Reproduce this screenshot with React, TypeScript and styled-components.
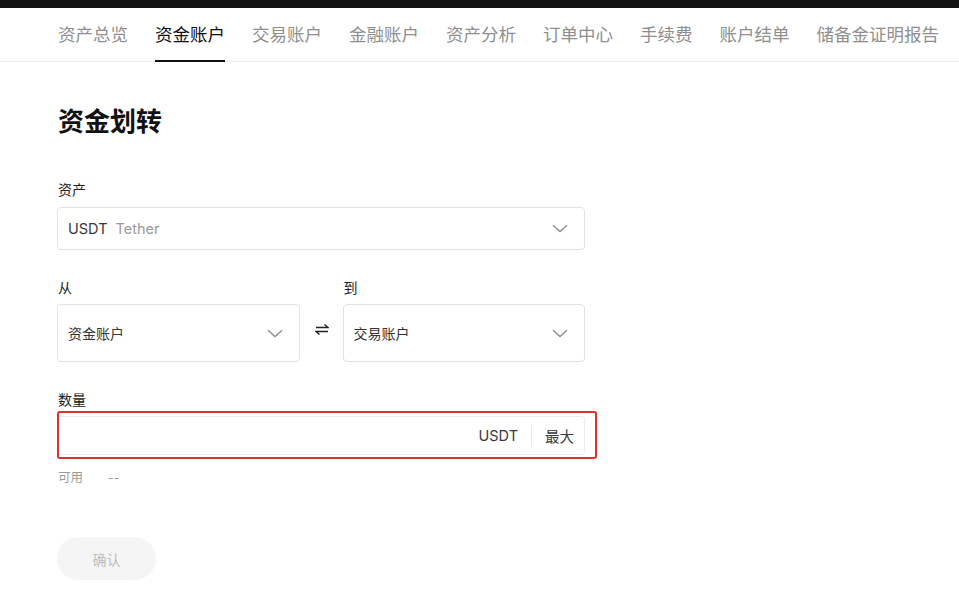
import React from "react";
import styled, { createGlobalStyle } from "styled-components";

const Global = createGlobalStyle`
  html, body { margin: 0; padding: 0; background: #fff; }
  body { font-family: Inter, "Noto Sans CJK SC", sans-serif; color: #1a1a1a; }
  * { box-sizing: border-box; }
`;

const TopBar = styled.div`
  height: 8px;
  background: #121212;
`;

const Nav = styled.nav`
  display: flex;
  gap: 27px;
  height: 54px;
  padding-left: 58px;
  border-bottom: 1px solid #ececec;
`;

const Tab = styled.div<{ $active?: boolean }>`
  display: flex;
  align-items: center;
  padding-bottom: 2px;
  font-size: 17.5px;
  color: ${(p) => (p.$active ? "#111" : "#8f8f8f")};
  white-space: nowrap;
  border-bottom: 2.5px solid ${(p) => (p.$active ? "#111" : "transparent")};
  margin-bottom: -1px;
`;

const Main = styled.main`
  width: 585px;
  padding-left: 57px;
  display: flex;
  flex-direction: column;
`;

const Title = styled.h1`
  margin: 42px 0 0 1px;
  font-size: 26px;
  line-height: 36px;
  font-weight: 700;
  color: #111;
`;

const Label = styled.div<{ $top: number }>`
  margin-top: ${(p) => p.$top}px;
  margin-left: 1px;
  font-size: 14px;
  line-height: 20px;
  color: #222;
`;

const Select = styled.div<{ $h: number; $gap: number }>`
  display: flex;
  align-items: center;
  justify-content: space-between;
  height: ${(p) => p.$h}px;
  margin-top: ${(p) => p.$gap}px;
  padding: 0 16px 0 10px;
  border: 1px solid #e3e3e3;
  border-radius: 4px;
  background: #fff;
  font-size: 14px;
  color: #333;
`;

const Value = styled.div`
  display: flex;
  align-items: baseline;
  gap: 8px;
  font-size: 14.5px;
  color: #3a3a3a;
`;

const Sub = styled.span`
  color: #9a9a9a;
`;

const Row = styled.div`
  display: grid;
  grid-template-columns: 1fr 43px 1fr;
`;

const Col = styled.div`
  display: flex;
  flex-direction: column;
`;

const SwapCell = styled.div`
  display: flex;
  align-items: flex-end;
  justify-content: center;
  padding-bottom: 27px;
  padding-left: 1px;
`;

const Highlight = styled.div`
  width: 540px;
  height: 48px;
  margin-top: 1px;
  border: 2px solid #e0322d;
  border-radius: 3px;
  padding-top: 3px;
`;

const AmountField = styled.div`
  display: flex;
  align-items: center;
  justify-content: flex-end;
  width: 526px;
  height: 39px;
  border: 1px solid #ececec;
  border-left: none;
  border-radius: 0 4px 4px 0;
  padding-right: 10px;
  font-size: 14.5px;
  color: #3a3a3a;
`;

const Unit = styled.span`
  padding-right: 13px;
`;

const Divider = styled.span`
  width: 1px;
  height: 22px;
  background: #e6e6e6;
`;

const Max = styled.span`
  padding-left: 13px;
`;

const Avail = styled.div`
  display: flex;
  gap: 25px;
  margin-top: 10px;
  margin-left: 1px;
  font-size: 12.5px;
  line-height: 18px;
  color: #9a9a9a;
`;

const Confirm = styled.button`
  margin-top: 50px;
  width: 99px;
  height: 43px;
  border: none;
  border-radius: 22px;
  background: #f5f5f5;
  color: #bdbdbd;
  font-family: inherit;
  font-size: 14px;
`;

const Chevron = () => (
  <svg width="16" height="9" viewBox="0 0 16 9" fill="none">
    <path d="M1 1.2 L8 7.6 L15 1.2" stroke="#8a8a8a" strokeWidth="1.3" />
  </svg>
);

const Swap = () => (
  <svg width="14" height="11" viewBox="0 0 14 11" fill="none" stroke="#222" strokeWidth="1.4">
    <path d="M1 3.5 H13 L9.5 0.5" />
    <path d="M13 7.5 H1 L4.5 10.5" />
  </svg>
);

const tabs = ["资产总览", "资金账户", "交易账户", "金融账户", "资产分析", "订单中心", "手续费", "账户结单", "储备金证明报告"];

export default function App() {
  return (
    <>
      <Global />
      <TopBar />
      <Nav>
        {tabs.map((t) => (
          <Tab key={t} $active={t === "资金账户"}>
            {t}
          </Tab>
        ))}
      </Nav>
      <Main>
        <Title>资金划转</Title>
        <Label $top={40}>资产</Label>
        <Select $h={43} $gap={7}>
          <Value>
            <span>USDT</span>
            <Sub>Tether</Sub>
          </Value>
          <Chevron />
        </Select>
        <Row>
          <Col>
            <Label $top={28}>从</Label>
            <Select $h={58} $gap={6}>
              <span>资金账户</span>
              <Chevron />
            </Select>
          </Col>
          <SwapCell>
            <Swap />
          </SwapCell>
          <Col>
            <Label $top={28}>到</Label>
            <Select $h={58} $gap={6}>
              <span>交易账户</span>
              <Chevron />
            </Select>
          </Col>
        </Row>
        <Label $top={28}>数量</Label>
        <Highlight>
          <AmountField>
            <Unit>USDT</Unit>
            <Divider />
            <Max>最大</Max>
          </AmountField>
        </Highlight>
        <Avail>
          <span>可用</span>
          <span>--</span>
        </Avail>
        <Confirm>确认</Confirm>
      </Main>
    </>
  );
}
